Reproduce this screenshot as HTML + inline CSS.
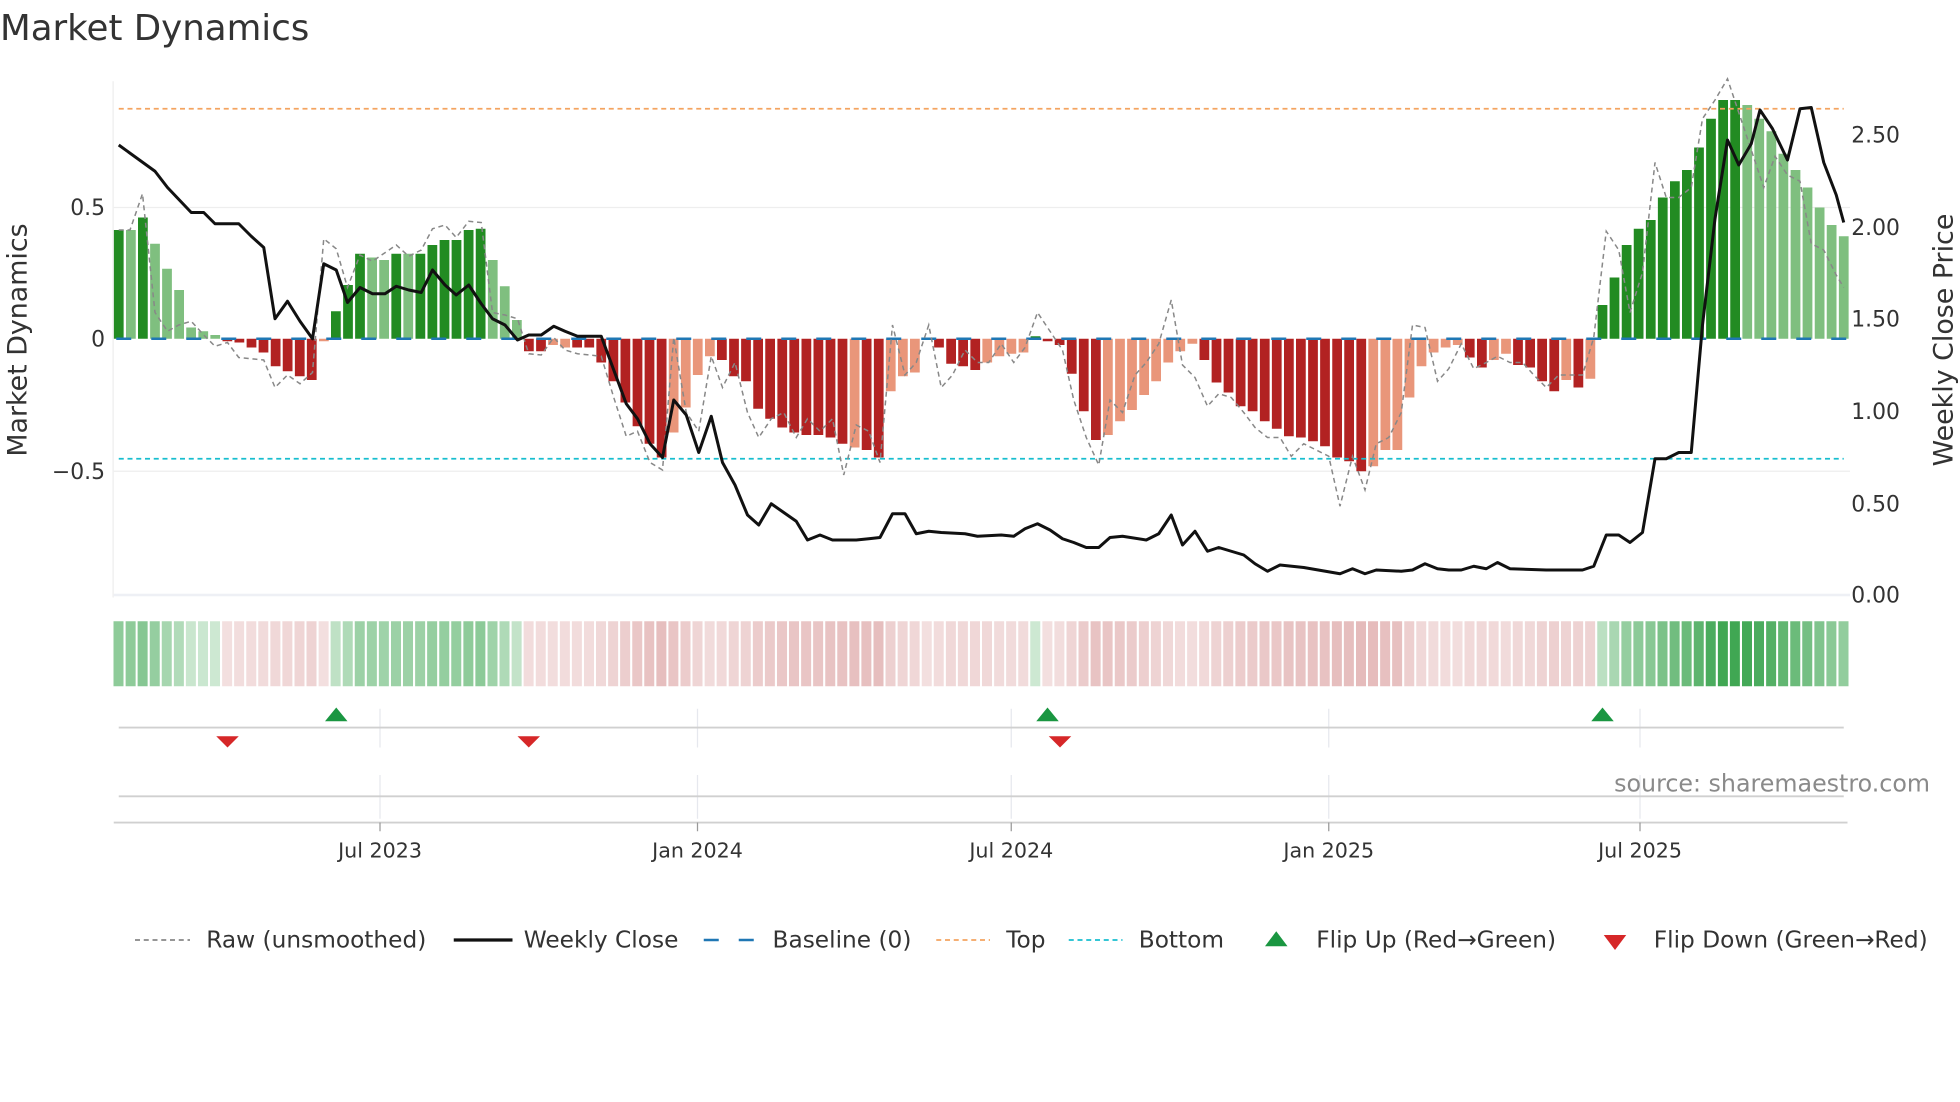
<!DOCTYPE html>
<html><head><meta charset="utf-8">
<style>
html,body{margin:0;padding:0;background:#fff;width:1960px;height:1102px;overflow:hidden}
svg{display:block}
text{font-family:"DejaVu Sans","Liberation Sans",sans-serif;fill:#333}
</style></head>
<body>
<svg id="s" width="1960" height="1102" viewBox="0 0 1568 881.6" xmlns="http://www.w3.org/2000/svg">
<text x="0" y="32" font-size="28.5" fill="#333">Market Dynamics</text>
<line x1="90.5" y1="65" x2="90.5" y2="478" stroke="#eee" stroke-width="1"/>
<line x1="91" y1="166" x2="1480" y2="166" stroke="#eee" stroke-width="1"/>
<line x1="91" y1="377" x2="1480" y2="377" stroke="#eee" stroke-width="1"/>
<line x1="91" y1="476" x2="1480" y2="476" stroke="#eef0f5" stroke-width="2"/>
<g id="bars"></g>
<line x1="93" y1="271" x2="1478" y2="271" stroke="#1f77b4" stroke-width="2" stroke-dasharray="12,16"/>
<line x1="95" y1="87" x2="1475" y2="87" stroke="#f4a460" stroke-width="1.4" stroke-dasharray="4,3"/>
<line x1="95" y1="367" x2="1475" y2="367" stroke="#17becf" stroke-width="1.4" stroke-dasharray="4,3"/>
<polyline id="raw" fill="none" stroke="#888" stroke-width="1.2" stroke-dasharray="4,3"/>
<polyline id="price" fill="none" stroke="#111" stroke-width="2.4" stroke-linejoin="round"/>
<g font-size="17.5">
<text x="84" y="172" text-anchor="end">0.5</text>
<text x="84" y="277" text-anchor="end">0</text>
<text x="84" y="383" text-anchor="end">−0.5</text>
<text x="1481" y="114">2.50</text>
<text x="1481" y="188">2.00</text>
<text x="1481" y="261">1.50</text>
<text x="1481" y="335">1.00</text>
<text x="1481" y="409">0.50</text>
<text x="1481" y="482">0.00</text>
</g>
<text transform="translate(21,272) rotate(-90)" font-size="21.5" text-anchor="middle">Market Dynamics</text>
<text transform="translate(1562,272) rotate(-90)" font-size="21.5" text-anchor="middle">Weekly Close Price</text>
<g id="heat"></g>
<g stroke="#e6e8ee" stroke-width="1">
<line x1="304" y1="567" x2="304" y2="598"/><line x1="558" y1="567" x2="558" y2="598"/><line x1="809" y1="567" x2="809" y2="598"/><line x1="1063" y1="567" x2="1063" y2="598"/><line x1="1312" y1="567" x2="1312" y2="598"/>
<line x1="304" y1="620" x2="304" y2="655"/><line x1="558" y1="620" x2="558" y2="655"/><line x1="809" y1="620" x2="809" y2="655"/><line x1="1063" y1="620" x2="1063" y2="655"/><line x1="1312" y1="620" x2="1312" y2="655"/>
</g>
<line x1="95" y1="582" x2="1475" y2="582" stroke="#d0d0d0" stroke-width="1.5"/>
<line x1="95" y1="637" x2="1475" y2="637" stroke="#d0d0d0" stroke-width="1.5"/>
<line x1="91" y1="658" x2="1478" y2="658" stroke="#d0d0d0" stroke-width="1.5"/>
<g stroke="#999" stroke-width="1"><line x1="304" y1="658" x2="304" y2="665"/><line x1="558" y1="658" x2="558" y2="665"/><line x1="809" y1="658" x2="809" y2="665"/><line x1="1063" y1="658" x2="1063" y2="665"/><line x1="1312" y1="658" x2="1312" y2="665"/></g>
<g font-size="16.5" text-anchor="middle">
<text x="304" y="686">Jul 2023</text><text x="558" y="686">Jan 2024</text><text x="809" y="686">Jul 2024</text><text x="1063" y="686">Jan 2025</text><text x="1312" y="686">Jul 2025</text>
</g>
<g fill="#1a9641">
<polygon points="260,577 278,577 269,566"/><polygon points="829,577 847,577 838,566"/><polygon points="1273,577 1291,577 1282,566"/>
</g>
<g fill="#d62728">
<polygon points="173,589 191,589 182,598"/><polygon points="414,589 432,589 423,598"/><polygon points="839,589 857,589 848,598"/>
</g>
<text x="1544" y="633" font-size="19" text-anchor="end" style="fill:#8a8a8a">source: sharemaestro.com</text>
<g font-size="18.6">
<line x1="108" y1="752" x2="152" y2="752" stroke="#888" stroke-width="1.4" stroke-dasharray="4,3"/>
<text x="165" y="758">Raw (unsmoothed)</text>
<line x1="363" y1="752" x2="410" y2="752" stroke="#111" stroke-width="2.6"/>
<text x="419" y="758">Weekly Close</text>
<line x1="563" y1="752" x2="606" y2="752" stroke="#1f77b4" stroke-width="2" stroke-dasharray="12,16"/>
<text x="618" y="758">Baseline (0)</text>
<line x1="749" y1="752" x2="792" y2="752" stroke="#f4a460" stroke-width="1.4" stroke-dasharray="4,3"/>
<text x="805" y="758">Top</text>
<line x1="855" y1="752" x2="898" y2="752" stroke="#17becf" stroke-width="1.4" stroke-dasharray="4,3"/>
<text x="911" y="758">Bottom</text>
<polygon points="1012,757 1030,757 1021,745" fill="#1a9641"/>
<text x="1053" y="758">Flip Up (Red→Green)</text>
<polygon points="1283,748 1301,748 1292,760" fill="#d62728"/>
<text x="1323" y="758">Flip Down (Green→Red)</text>
</g>
</svg>
<script>
(function(){
var B="G184 g184 G174 g195 g215 g232 g262 g265 g268 R273 R274 R278 R282 R293 R297 R301 R304 r273 G249 G228 G203 g206 g208 G203 g203 G203 G196 G192 G192 G184 G183 g208 g229 g256 R281 R281 r276 r278 R278 R278 R290 R305 R322 R341 R355 R366 r346 r326 r300 r285 R288 R301 R305 R327 R335 R342 R346 R348 R348 R350 R355 r358 R360 R366 r313 r301 r298 r272 R278 R291 R293 R296 r290 r285 r283 r282 G269 R273 R276 R299 R329 R352 r348 r337 r328 r316 r305 r290 r281 r275 R288 R306 R314 R325 R329 R337 R343 R349 R350 R353 R357 R366 R369 R377 r373 r360 r360 r318 r293 r282 r278 r276 R286 R294 r288 r283 R292 R294 R305 R313 r304 R310 r303 G244 G222 G196 G183 G176 G158 G145 G136 G118 G95 G80 G80 g84 g95 g105 g123 g136 g150 g166 g180 g189".split(" ");
var col={G:"#228b22",g:"#7fbf7f",R:"#b22222",r:"#e9967a"};
var n=B.length, step=(1475-95)/(n-1), bs="", hs="";
for(var i=0;i<n;i++){
 var c=B[i][0], yy=+B[i].slice(1), x=95+i*step;
 var ty=Math.min(yy,271), h=Math.abs(yy-271); if(h<1)h=1;
 bs+='<rect x="'+(x-3.9).toFixed(1)+'" y="'+ty+'" width="7.8" height="'+h+'" fill="'+col[c]+'"/>';
 var v=Math.abs(yy-271)/210, hc;
 if(c=="G"||c=="g"){ hc='rgba(60,165,80,'+(0.25+v*0.8).toFixed(2)+')'; }
 else { hc='rgba(200,110,110,'+(0.22+v*0.5).toFixed(2)+')'; }
 hs+='<rect x="'+(x-4.2).toFixed(1)+'" y="497" width="8" height="52" fill="'+hc+'"/>';
}
document.getElementById("bars").innerHTML=bs;
document.getElementById("heat").innerHTML=hs;
var P="95,116 124,137 134,150 153,170 163,170 172,179 191,179 201,189 211,198 220,255 230,241 240,257 250,271 259,211 269,216 278,242 288,230 298,235 308,235 317,229 327,232 337,234 346,216 356,228 365,236 375,228 385,243 394,255 404,260 414,272 423,268 433,268 443,261 452,265 462,269 481,269 491,296 501,323 510,335 520,355 530,366 539,320 549,332 559,362 569,333 578,370 588,388 598,412 607,420 617,403 627,410 637,417 646,432 656,428 666,432 685,432 695,431 704,430 714,411 724,411 733,427 743,425 753,426 772,427 782,429 801,428 811,429 820,423 830,419 840,424 850,431 859,434 869,438 879,438 888,430 898,429 917,432 927,427 937,412 946,436 956,425 966,441 975,438 985,441 995,444 1004,451 1014,457 1024,452 1043,454 1072,459 1082,455 1092,459 1101,456 1121,457 1130,456 1140,451 1150,455 1159,456 1169,456 1179,453 1189,455 1198,450 1208,455 1237,456 1256,456 1266,456 1275,453 1285,428 1295,428 1304,434 1314,426 1324,367 1333,367 1343,362 1353,362 1362,260 1372,175 1382,112 1391,132 1401,115 1408,88 1418,103 1430,128 1440,87 1449,86 1459,130 1469,156 1475,178";
document.getElementById("price").setAttribute("points",P);
var R="95,184 104,184 114,155 124,250 134,265 143,260 153,257 163,268 172,277 182,274 191,286 201,287 211,288 220,310 230,300 240,307 250,298 259,191 269,199 278,230 288,204 298,209 317,196 327,205 337,200 346,183 356,180 365,190 375,177 385,178 394,250 404,252 414,255 423,283 433,284 443,270 452,280 462,283 481,285 491,318 501,349 510,345 520,370 530,376 539,270 549,330 559,345 569,285 578,310 588,290 598,330 607,350 617,335 627,330 637,350 646,335 656,345 666,335 675,380 685,340 695,345 704,370 714,260 724,300 733,290 743,260 753,310 762,300 772,280 782,290 791,290 801,275 811,290 820,278 830,250 840,265 850,280 859,320 869,350 879,372 888,320 898,330 908,300 917,290 927,275 937,240 946,292 956,302 966,325 975,315 985,318 995,330 1004,342 1014,350 1024,350 1033,365 1043,355 1053,360 1063,365 1072,405 1082,365 1092,392 1101,355 1111,350 1121,330 1130,260 1140,262 1150,305 1159,295 1169,275 1179,295 1189,290 1198,285 1208,290 1218,290 1227,300 1237,310 1247,300 1256,300 1266,300 1275,270 1285,185 1295,200 1304,250 1314,218 1324,130 1333,158 1343,158 1353,150 1362,95 1372,80 1382,63 1391,90 1401,120 1411,150 1420,125 1430,140 1440,145 1449,195 1459,200 1469,220 1475,230";
document.getElementById("raw").setAttribute("points",R);
})();
</script>
</body></html>
